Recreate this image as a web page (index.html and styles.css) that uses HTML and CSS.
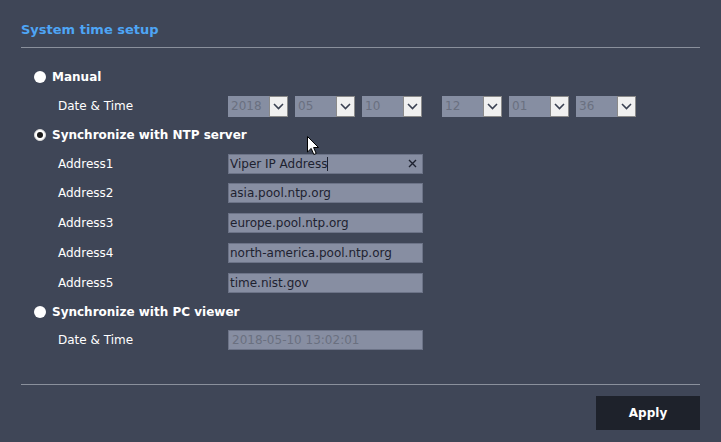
FILE: index.html
```html
<!DOCTYPE html>
<html>
<head>
<meta charset="utf-8">
<link rel="stylesheet" href="styles.css">
</head>
<body>
<div class="page">
  <div class="header"><span class="title">System time setup</span></div>
  <div class="content">
    <div class="radio-row">
      <span class="radio"></span><span class="radio-label">Manual</span>
    </div>
    <div class="field-row">
      <span class="label">Date &amp; Time</span>
      <div class="selects">
        <div class="group">
          <div class="select"><span class="val">2018</span><span class="arrow"><svg width="11" height="7" viewBox="0 0 11 7"><path d="M1 1 L5.5 5.5 L10 1" fill="none" stroke="#3a4152" stroke-width="1.6"/></svg></span></div>
          <div class="select"><span class="val">05</span><span class="arrow"><svg width="11" height="7" viewBox="0 0 11 7"><path d="M1 1 L5.5 5.5 L10 1" fill="none" stroke="#3a4152" stroke-width="1.6"/></svg></span></div>
          <div class="select"><span class="val">10</span><span class="arrow"><svg width="11" height="7" viewBox="0 0 11 7"><path d="M1 1 L5.5 5.5 L10 1" fill="none" stroke="#3a4152" stroke-width="1.6"/></svg></span></div>
        </div>
        <div class="group">
          <div class="select"><span class="val">12</span><span class="arrow"><svg width="11" height="7" viewBox="0 0 11 7"><path d="M1 1 L5.5 5.5 L10 1" fill="none" stroke="#3a4152" stroke-width="1.6"/></svg></span></div>
          <div class="select"><span class="val">01</span><span class="arrow"><svg width="11" height="7" viewBox="0 0 11 7"><path d="M1 1 L5.5 5.5 L10 1" fill="none" stroke="#3a4152" stroke-width="1.6"/></svg></span></div>
          <div class="select"><span class="val">36</span><span class="arrow"><svg width="11" height="7" viewBox="0 0 11 7"><path d="M1 1 L5.5 5.5 L10 1" fill="none" stroke="#3a4152" stroke-width="1.6"/></svg></span></div>
        </div>
      </div>
    </div>
    <div class="radio-row">
      <span class="radio checked"></span><span class="radio-label">Synchronize with NTP server</span>
    </div>
    <div class="field-row first">
      <span class="label">Address1</span>
      <div class="input focus"><span class="text">Viper IP Address</span><span class="caret"></span><svg class="clear" width="9" height="9" viewBox="0 0 9 9"><path d="M1 1 L8 8 M8 1 L1 8" stroke="#1e2230" stroke-width="1.4"/></svg></div>
    </div>
    <div class="field-row">
      <span class="label">Address2</span>
      <div class="input"><span class="text">asia.pool.ntp.org</span></div>
    </div>
    <div class="field-row">
      <span class="label">Address3</span>
      <div class="input"><span class="text">europe.pool.ntp.org</span></div>
    </div>
    <div class="field-row">
      <span class="label">Address4</span>
      <div class="input"><span class="text">north-america.pool.ntp.org</span></div>
    </div>
    <div class="field-row">
      <span class="label">Address5</span>
      <div class="input"><span class="text">time.nist.gov</span></div>
    </div>
    <div class="radio-row short">
      <span class="radio"></span><span class="radio-label">Synchronize with PC viewer</span>
    </div>
    <div class="field-row">
      <span class="label">Date &amp; Time</span>
      <div class="input disabled"><span class="text">2018-05-10 13:02:01</span></div>
    </div>
  </div>
  <div class="footer">
    <button class="apply">Apply</button>
  </div>
  <svg class="pointer" width="13" height="20" viewBox="0 0 13 20"><path d="M0.5 0.5 L0.5 16 L4.2 12.4 L6.8 18.5 L9.2 17.5 L6.6 11.5 L11.5 11.5 Z" fill="#ffffff" stroke="#000000" stroke-width="1"/></svg>
</div>
</body>
</html>
```
FILE: styles.css
```css
html, body {
  margin: 0;
  padding: 0;
  background: #3f4657;
}
body {
  width: 721px;
  height: 442px;
  overflow: hidden;
  font-family: "DejaVu Sans", Verdana, sans-serif;
  font-size: 12px;
  color: #ffffff;
}
.page {
  position: relative;
  width: 721px;
  height: 442px;
}
.header {
  margin-left: 21px;
  width: 679px;
  padding-top: 21px;
  height: 26px;
  border-bottom: 1px solid #8a909c;
  box-sizing: content-box;
}
.title {
  display: block;
  line-height: 18px;
  font-weight: bold;
  font-size: 13px;
  color: #4ea5f5;
}
.content {
  margin-left: 21px;
  width: 666px;
  padding-top: 15px;
  padding-left: 13px;
  height: 321px;
  box-sizing: content-box;
  border-bottom: 1px solid #8a909c;
}
.radio-row {
  height: 28px;
  display: flex;
  align-items: center;
}
.radio-row.short {
  height: 27px;
}
.radio {
  width: 12px;
  height: 12px;
  border-radius: 50%;
  background: #ffffff;
  box-sizing: border-box;
  margin-right: 6px;
  position: relative;
}
.radio.checked {
  border: 1px solid #d8d8d8;
  background: #ffffff;
}
.radio.checked::after {
  content: "";
  position: absolute;
  left: 2px;
  top: 2px;
  width: 6px;
  height: 6px;
  border-radius: 50%;
  background: #1a1a1a;
}
.radio-label {
  font-weight: bold;
  color: #ffffff;
}
.field-row {
  height: 30px;
  display: flex;
  align-items: center;
  padding-left: 24px;
}
.field-row.first {
  height: 29px;
}
.label {
  width: 170px;
  color: #ffffff;
}
.selects {
  display: flex;
  gap: 20px;
}
.group {
  display: flex;
  gap: 7px;
}
.select {
  width: 60px;
  height: 21px;
  display: flex;
  background: #868ea2;
  box-sizing: border-box;
}
.select .val {
  flex: 1;
  line-height: 21px;
  padding-left: 3px;
  color: #6a7080;
  font-size: 12px;
}
.select .arrow {
  width: 19px;
  height: 21px;
  box-sizing: border-box;
  border: 1px solid #8a8a8a;
  background: #f0f0f0;
  display: flex;
  align-items: center;
  justify-content: center;
}
.input {
  width: 195px;
  height: 20px;
  box-sizing: border-box;
  background: #878ea2;
  border: 1px solid #6c7387;
  display: flex;
  align-items: center;
  padding-left: 1px;
  position: relative;
}
.input .text {
  color: #1e2230;
  font-size: 12px;
  white-space: nowrap;
}
.input.disabled .text {
  color: #6a7080;
  padding-left: 2px;
}
.caret {
  width: 1px;
  height: 14px;
  background: #1e2230;
}
.clear {
  margin-left: auto;
  margin-right: 5px;
}
.footer {
  display: flex;
  justify-content: flex-end;
  width: 700px;
  padding-top: 11px;
}
.apply {
  width: 104px;
  height: 34px;
  border: none;
  background: #1e222b;
  color: #ffffff;
  font-family: "DejaVu Sans", Verdana, sans-serif;
  font-weight: bold;
  font-size: 12px;
  padding: 0;
}
.pointer {
  position: absolute;
  left: 307px;
  top: 136px;
}
```
